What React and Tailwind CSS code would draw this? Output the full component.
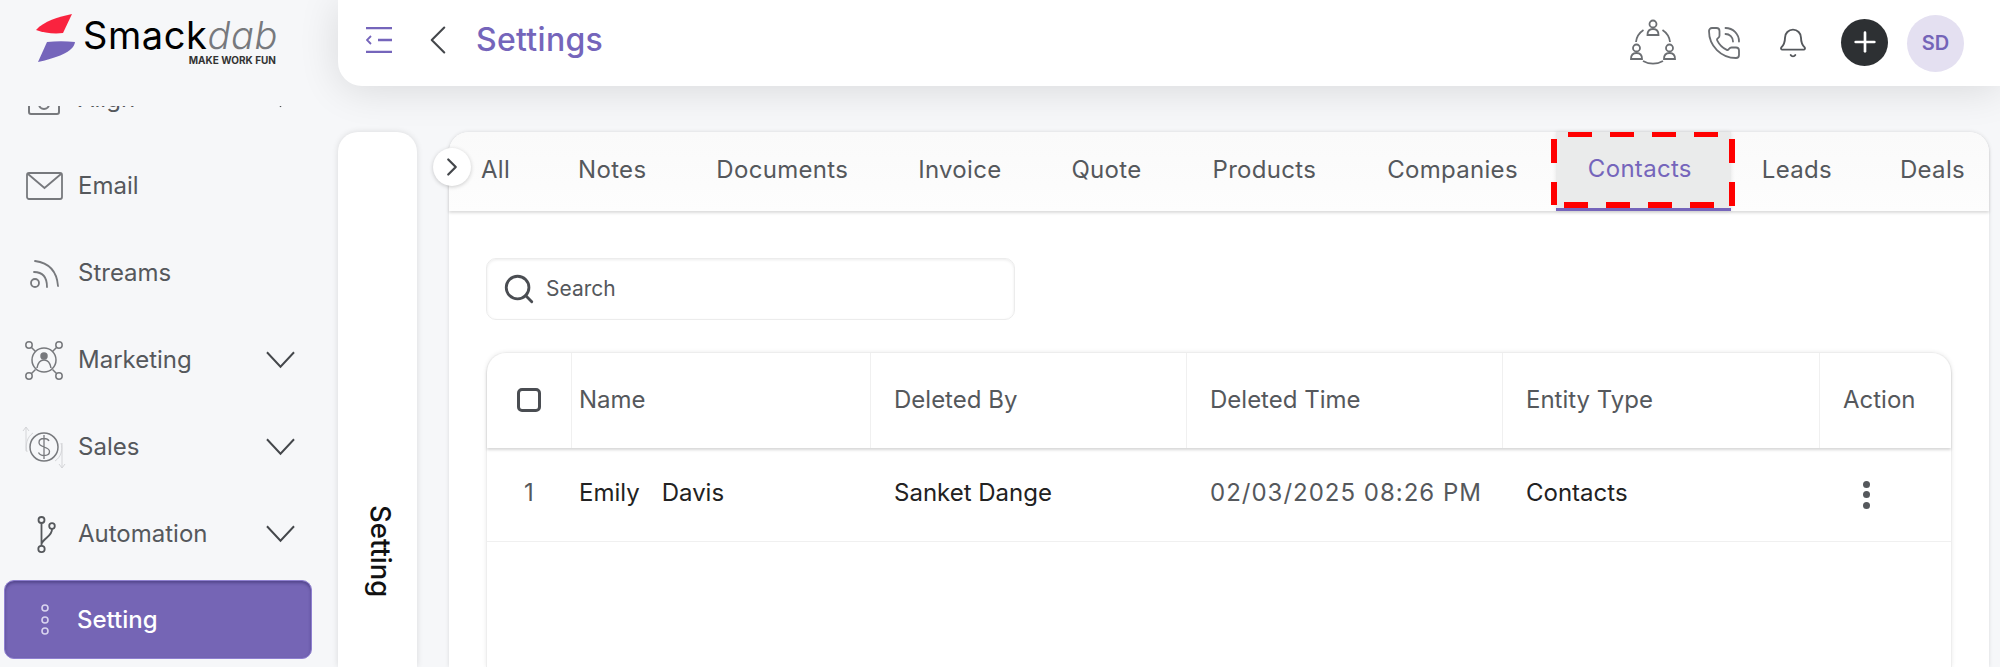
import React from "react"
import { Bell, ChevronLeft, ChevronRight, PhoneCall, Plus, Search } from "lucide-react"

const tabs = [
	{ label: "All", nudge: "mr-[-2px]" },
	{ label: "Notes" },
	{ label: "Documents" },
	{ label: "Invoice" },
	{ label: "Quote" },
	{ label: "Products", nudge: "ml-[1px]" },
	{ label: "Companies", nudge: "ml-[1px]" },
	{ label: "Contacts" },
	{ label: "Leads", nudge: "mr-[-2px]" },
	{ label: "Deals" },
]

const AlignIcon = () => (
	<svg viewBox="0 0 44 44" className="w-[44px] h-[44px]" fill="none" stroke="#77797d" strokeWidth="2">
		<rect x="7" y="8" width="30" height="29" rx="2" />
		<circle cx="22" cy="27" r="5" />
	</svg>
)

const EmailIcon = () => (
	<svg viewBox="0 0 44 44" className="w-[44px] h-[44px]" fill="none" stroke="#77797d" strokeWidth="1.8">
		<rect x="5" y="9" width="35" height="26" rx="2" />
		<path d="M6 10l16.500 14L39 10" />
	</svg>
)

const StreamsIcon = () => (
	<svg viewBox="0 0 44 44" className="w-[44px] h-[44px]" fill="none" stroke="#77797d" strokeWidth="1.800" strokeLinecap="round">
		<circle cx="13" cy="32" r="4" />
		<path d="M12 21c9 0 13 6 13 15" />
		<path d="M13 10c15 2 22 12 23 25" />
	</svg>
)

const MarketingIcon = () => (
	<svg viewBox="0 0 44 44" className="w-[44px] h-[44px]" fill="none" stroke="#77797d" strokeWidth="1.500">
		<circle cx="22" cy="22" r="12" />
		<circle cx="22" cy="18" r="3" fill="#77797d" />
		<path d="M15 30c1-6 4-8 7-8s6 2 7 8" />
		<circle cx="7" cy="7" r="3.200" />
		<circle cx="37" cy="7" r="3.200" />
		<circle cx="7" cy="38" r="3.200" />
		<circle cx="37" cy="38" r="3.200" />
		<path d="M9.500 9.500l4 4M34.500 9.500l-4 4M9.500 35.500l4-4M34.500 35.500l-4-4" />
	</svg>
)

const SalesIcon = () => (
	<svg viewBox="0 0 44 44" className="w-[44px] h-[44px]" fill="none" stroke="#77797d" strokeWidth="1.500">
		<circle cx="22" cy="22" r="14" />
		<path d="M27 16c-1-2-3-2.500-5-2.500-3 0-5 1.500-5 4s2 3.500 5 4.500 5.500 2 5.500 4.500-2.500 4-5.500 4c-2.500 0-4.500-1-5.500-3M22 10v24" strokeWidth="1.300" />
		<path d="M4 26V2M1 6l3-4 3 4M40 18v25M37 39l3 4 3-4" stroke="#d4d5d8" strokeWidth="1" />
		<path d="M11 8c-6 4-8 12-6 19M33 36c6-4 8-11 6-18" stroke="#d4d5d8" strokeWidth="1" />
	</svg>
)

const AutomationIcon = () => (
	<svg viewBox="0 0 44 44" className="w-[44px] h-[44px]" fill="none" stroke="#55585c" strokeWidth="1.800">
		<circle cx="19.500" cy="8" r="3" />
		<circle cx="19.500" cy="37" r="3.200" />
		<circle cx="30" cy="14" r="2.800" />
		<path d="M19.500 11v23M19.500 32c2-6 11-8 10.500-15" />
	</svg>
)

const DotsIcon = () => (
	<svg viewBox="0 0 44 44" className="w-[44px] h-[44px]" fill="none" stroke="#d8d3ee" strokeWidth="1.600">
		<circle cx="22" cy="10" r="3" />
		<circle cx="22" cy="22" r="3" />
		<circle cx="22" cy="33" r="3" />
	</svg>
)

const TeamIcon = () => (
	<svg viewBox="0 0 48 48" className="w-[48px] h-[48px]" fill="none" stroke="#6b6e72" strokeWidth="1.800">
		<circle cx="24" cy="7" r="3.500" />
		<path d="M18.500 18c0-4 2.500-6 5.500-6s5.500 2 5.500 6z" />
		<circle cx="7.500" cy="31" r="3.500" />
		<path d="M2 42c0-4 2.500-6 5.500-6s5.500 2 5.500 6z" />
		<circle cx="40.500" cy="31" r="3.500" />
		<path d="M35 42c0-4 2.500-6 5.500-6s5.500 2 5.500 6z" />
		<path d="M14.500 13C10 16 7.500 20 7 25M33.500 13c4.500 3 7 7 7.500 12M14 44c6 3.500 14 3.500 20 0" />
	</svg>
)

const MenuIcon = () => (
	<svg viewBox="0 0 26 26" className="w-[26px] h-[26px]" fill="none" stroke="#7565bb" strokeWidth="2.400">
		<path d="M0 1h26M12 13h14M0 25h26" />
		<path d="M5 9l-4 4 4 4" strokeWidth="1.800" />
	</svg>
)

const NavArrow = () => (
	<svg viewBox="0 0 30 18" className="ml-auto w-[29px] h-[18px] shrink-0" fill="none" stroke="#44474b" strokeWidth="2">
		<path d="M1 1l14 15L29 1" />
	</svg>
)

const navItems = [
	{ label: "Align", icon: AlignIcon, arrow: true },
	{ label: "Email", icon: EmailIcon },
	{ label: "Streams", icon: StreamsIcon },
	{ label: "Marketing", icon: MarketingIcon, arrow: true },
	{ label: "Sales", icon: SalesIcon, arrow: true },
	{ label: "Automation", icon: AutomationIcon, arrow: true },
]

function Sidebar() {
	return (
		<aside className="w-[338px] h-full shrink-0 flex flex-col">
			<div className="h-[106px] shrink-0 flex items-start pl-[36px] pt-[14px]">
				<svg viewBox="0 0 40 50" className="w-[40px] h-[50px] shrink-0">
					<path d="M0 16C8 7 22 3 36 0L27 19C18 20 8 19 0 16Z" fill="#f9233f" />
					<path d="M2 48L11 28C20 27 30 27 39 28C38 38 20 44 2 48Z" fill="#7565bb" />
				</svg>
				<div className="ml-[7px] w-[195px] flex flex-col items-end">
					<div className="text-[38px] leading-[38px] mt-[2px] tracking-[0.6px] text-black whitespace-nowrap">
						Smack<span className="italic font-light text-[#77797d]">dab</span>
					</div>
					<div className="text-[10px] leading-[12px] font-bold text-[#333] whitespace-nowrap mr-[2px]">MAKE WORK FUN</div>
				</div>
			</div>
			<nav className="flex-1 overflow-hidden">
				<div className="mt-[-51px]">
					{navItems.map((item) => (
						<div key={item.label} className="h-[87px] flex items-center pl-[22px] pr-[43px] text-[24px] text-[#55585c]">
							<item.icon />
							<span className="ml-[12px]">{item.label}</span>
							{item.arrow && <NavArrow />}
						</div>
					))}
					<div className="h-[79px] ml-[4px] w-[308px] mt-[3px] flex items-center pl-[18px] rounded-[10px] bg-[#7565b5] border border-[#8f80d0] shadow-[inset_0_2px_3px_rgba(50,40,100,0.5)] text-[24px] font-medium text-white">
						<DotsIcon />
						<span className="ml-[10px]">Setting</span>
					</div>
				</div>
			</nav>
		</aside>
	)
}

function Header() {
	return (
		<header className="h-[86px] shrink-0 bg-white rounded-bl-[24px] shadow-[0_4px_40px_rgba(0,0,0,0.12)] flex items-center pl-[28px] pr-[36px] z-10">
			<div className="flex items-center mb-[6px]">
				<MenuIcon />
				<ChevronLeft className="ml-[21px] w-[50px] h-[50px] text-[#44474b] -mx-[8px]" strokeWidth={1} />
				<h1 className="ml-[21px] text-[32px] font-medium tracking-[0.3px] text-[#7565bb]">Settings</h1>
			</div>
			<div className="ml-auto flex items-center">
				<div className="mb-[4px]"><TeamIcon /></div>
				<PhoneCall className="ml-[29px] mr-[1px] w-[36px] h-[36px] text-[#6b6e72]" strokeWidth={1.2} />
				<Bell className="ml-[34px] w-[32px] h-[32px] text-[#55585c]" strokeWidth={1.4} />
				<div className="ml-[32px] mb-[2px] w-[47px] h-[47px] rounded-full bg-[#2d3033] flex items-center justify-center">
					<Plus className="w-[32px] h-[32px] text-white" strokeWidth={2} />
				</div>
				<div className="ml-[19px] w-[57px] h-[57px] rounded-full bg-[#e4e0f1] flex items-center justify-center text-[20px] font-semibold text-[#7464b8]">SD</div>
			</div>
		</header>
	)
}

function Tabs() {
	return (
		<div className="relative h-[79px] shrink-0 rounded-t-[20px] bg-gradient-to-b from-[#fafafa] to-[#fdfdfd] shadow-[0_2px_3px_rgba(0,0,0,0.14)] flex text-[24px] tracking-[0.3px] text-[#55585c]">
			<button className="absolute left-[-16px] top-[16px] w-[38px] h-[38px] rounded-full bg-white shadow-[0_1px_4px_rgba(0,0,0,0.2)] flex items-center justify-center">
				<ChevronRight className="w-[30px] h-[30px] text-[#44474b]" strokeWidth={1.800} />
			</button>
			<div className="flex ml-[-3px]">
				{tabs.map((tab) => (
					<div
						key={tab.label}
						className={
							tab.label === "Contacts"
								? "relative ml-[3px] mr-[-4px] pl-[32px] pr-[39px] pb-[2px] flex items-center bg-[#eaebeb] text-[#7565bb] border-b-[3px] border-[#7565bb] shadow-[0_0_4px_rgba(0,0,0,0.1)]"
								: `px-[35px] pb-[3px] flex items-center ${tab.nudge || ""}`
						}
					>
						{tab.label}
						{tab.label === "Contacts" && (
							<svg viewBox="0 0 184 78" className="absolute left-[-5px] top-0 w-[184px] h-[78px]" fill="#ff0000">
								<path d="M17 0h24v5H17zM59 0h24v5H59zM101 0h24v5h-24zM143 0h24v5h-24z" />
								<path d="M0 7h6v24H0zM0 50h6v23H0zM178 7h6v24h-6zM178 50h6v24h-6z" />
								<path d="M13 70h24v6H13zM55 70h24v6H55zM97 70h24v6H97zM139 70h24v6h-24z" />
							</svg>
						)}
					</div>
				))}
			</div>
		</div>
	)
}

function Table() {
	const headCell = "border-l border-[#f0f0f0] pl-[23px] pt-[29px]"
	return (
		<div className="mt-[32px] flex-1 rounded-t-[20px] border border-b-0 border-[#eeeeee] shadow-[0_0_4px_rgba(0,0,0,0.08)] text-[24px]">
			<div className="h-[95px] grid grid-cols-[84px_299px_316px_316px_317px_1fr] rounded-t-[20px] shadow-[0_2px_3px_rgba(0,0,0,0.16)] text-[#55585c]">
				<div className="flex justify-center pt-[35px]">
					<div className="w-[24px] h-[24px] rounded-[5px] border-[3px] border-[#4a4d52]" />
				</div>
				<div className={`${headCell} !pl-[7px]`}>Name</div>
				<div className={headCell}>Deleted By</div>
				<div className={headCell}>Deleted Time</div>
				<div className={headCell}>Entity Type</div>
				<div className={headCell}>Action</div>
			</div>
			<div className="h-[94px] grid grid-cols-[84px_299px_316px_316px_317px_1fr] items-center border-b border-[#f0f0f0] text-[#222]">
				<div className="text-center text-[#55585c] mb-[3px]">1</div>
				<div className="pl-[8px] mb-[3px] flex gap-[22px]"><span>Emily</span><span>Davis</span></div>
				<div className="pl-[24px] mb-[3px]">Sanket Dange</div>
				<div className="pl-[24px] mb-[3px] text-[#55585c] whitespace-nowrap tracking-[1px]">02/03/2025 08:26 PM</div>
				<div className="pl-[24px] mb-[3px]">Contacts</div>
				<div className="pl-[44px] flex flex-col gap-[3.500px]">
					<span className="w-[7px] h-[7px] rounded-full bg-[#55585c]" />
					<span className="w-[7px] h-[7px] rounded-full bg-[#55585c]" />
					<span className="w-[7px] h-[7px] rounded-full bg-[#55585c]" />
				</div>
			</div>
		</div>
	)
}

export default function App() {
	return (
		<div className="w-[2000px] h-[667px] overflow-hidden flex bg-[#f6f7f9] font-['Inter',sans-serif]">
			<Sidebar />
			<main className="flex-1 flex flex-col min-w-0">
				<Header />
				<div className="flex-1 flex pt-[46px] pr-[11px] min-h-0">
					<div className="w-[79px] shrink-0 rounded-t-[20px] bg-white shadow-[0_0_6px_rgba(0,0,0,0.12)] flex justify-center pl-[6px] pt-[373px] text-[27.500px] font-medium text-[#111]">
						<span className="[writing-mode:vertical-rl] h-fit">Setting</span>
					</div>
					<section className="ml-[32px] flex-1 min-w-0 rounded-t-[20px] bg-white shadow-[0_0_4px_rgba(0,0,0,0.12)] flex flex-col">
						<Tabs />
						<div className="flex-1 flex flex-col px-[37px] pt-[47px] min-h-0">
							<div className="w-[529px] h-[62px] shrink-0 rounded-[10px] border border-[#ececec] shadow-[inset_0_1px_3px_rgba(0,0,0,0.08)] flex items-center pl-[15px] text-[21px] text-[#55585c]">
								<Search className="w-[34px] h-[34px] text-[#4a4d52]" strokeWidth={2} />
								<span className="ml-[10px]">Search</span>
							</div>
							<Table />
						</div>
					</section>
				</div>
			</main>
		</div>
	)
}
